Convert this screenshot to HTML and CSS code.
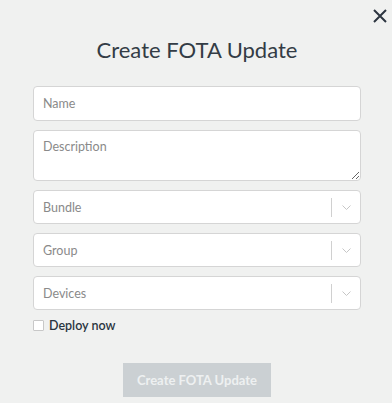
FILE: index.html
```html
<!DOCTYPE html>
<html lang="en">
<head>
  <meta charset="UTF-8">
  <meta name="viewport" content="width=device-width, initial-scale=1.0">
  <title>Create FOTA Update</title>
  <link rel="stylesheet" href="styles.css">
</head>
<body>
  <div class="modal">
    <button class="close" aria-label="Close">
      <svg width="14" height="14" viewBox="0 0 14 14">
        <path d="M1 1 L13 13 M13 1 L1 13" stroke="#2c3540" stroke-width="2" fill="none"/>
      </svg>
    </button>
    <h1 class="title">Create FOTA Update</h1>
    <form class="form">
      <input class="field" type="text" placeholder="Name">
      <textarea class="field area" placeholder="Description"></textarea>
      <div class="select">
        <span class="placeholder">Bundle</span>
        <span class="divider"></span>
        <svg class="chevron" width="9" height="5" viewBox="0 0 9 5"><path d="M0.5 0.5 L4.5 4.5 L8.5 0.5" stroke="#c6c6c6" fill="none"/></svg>
      </div>
      <div class="select">
        <span class="placeholder">Group</span>
        <span class="divider"></span>
        <svg class="chevron" width="9" height="5" viewBox="0 0 9 5"><path d="M0.5 0.5 L4.5 4.5 L8.5 0.5" stroke="#c6c6c6" fill="none"/></svg>
      </div>
      <div class="select">
        <span class="placeholder">Devices</span>
        <span class="divider"></span>
        <svg class="chevron" width="9" height="5" viewBox="0 0 9 5"><path d="M0.5 0.5 L4.5 4.5 L8.5 0.5" stroke="#c6c6c6" fill="none"/></svg>
      </div>
      <label class="check">
        <span class="box"></span>
        Deploy now
      </label>
      <button class="submit" type="button" disabled>Create FOTA Update</button>
    </form>
  </div>
</body>
</html>
```

FILE: styles.css
```css
html, body {
  margin: 0;
  height: 100%;
  background: #f0f1f0;
  font-family: Lato, "Noto Sans", sans-serif;
}

.modal {
  position: relative;
  display: flex;
  flex-direction: column;
  padding: 0 31px 0 33px;
}

.close {
  position: absolute;
  top: 9px;
  right: 5px;
  width: 14px;
  height: 14px;
  padding: 0;
  border: 0;
  background: none;
  display: flex;
}

.title {
  margin: 35px 0 21px;
  font-size: 22px;
  line-height: 30px;
  font-weight: 400;
  text-align: center;
  color: #333c45;
}

.form {
  display: flex;
  flex-direction: column;
  gap: 9px;
}

.field {
  box-sizing: border-box;
  width: 100%;
  height: 35px;
  margin: 0;
  padding: 0 9px;
  border: 1px solid #d5d5d5;
  border-radius: 4px;
  background: #fff;
  font-family: inherit;
  font-size: 12.5px;
  color: #333;
  outline: none;
}

.field::placeholder {
  color: #8a8a8a;
}

.area {
  height: 51px;
  padding: 8px 9px;
  resize: vertical;
  display: block;
}

.select {
  box-sizing: border-box;
  height: 34px;
  display: flex;
  align-items: center;
  padding-left: 9px;
  border: 1px solid #d5d5d5;
  border-radius: 4px;
  background: #fff;
}

.placeholder {
  flex: 1;
  font-size: 12.5px;
  color: #8a8a8a;
}

.divider {
  width: 1px;
  height: 19px;
  background: #d0d0d0;
}

.chevron {
  margin: 0 9px 0 10px;
}

.check {
  display: flex;
  align-items: center;
  gap: 5px;
  margin-top: -1px;
  font-size: 12.5px;
  font-weight: 600;
  color: #2a3540;
}

.box {
  box-sizing: border-box;
  width: 11px;
  height: 11px;
  border: 1px solid #c8c8c8;
  border-radius: 1px;
  background: #fff;
}

.submit {
  align-self: center;
  margin-top: 21px;
  width: 148px;
  height: 34px;
  border: 0;
  background: #cbd0d3;
  color: #eef0f1;
  font-family: inherit;
  font-size: 13px;
  font-weight: 700;
}
```
